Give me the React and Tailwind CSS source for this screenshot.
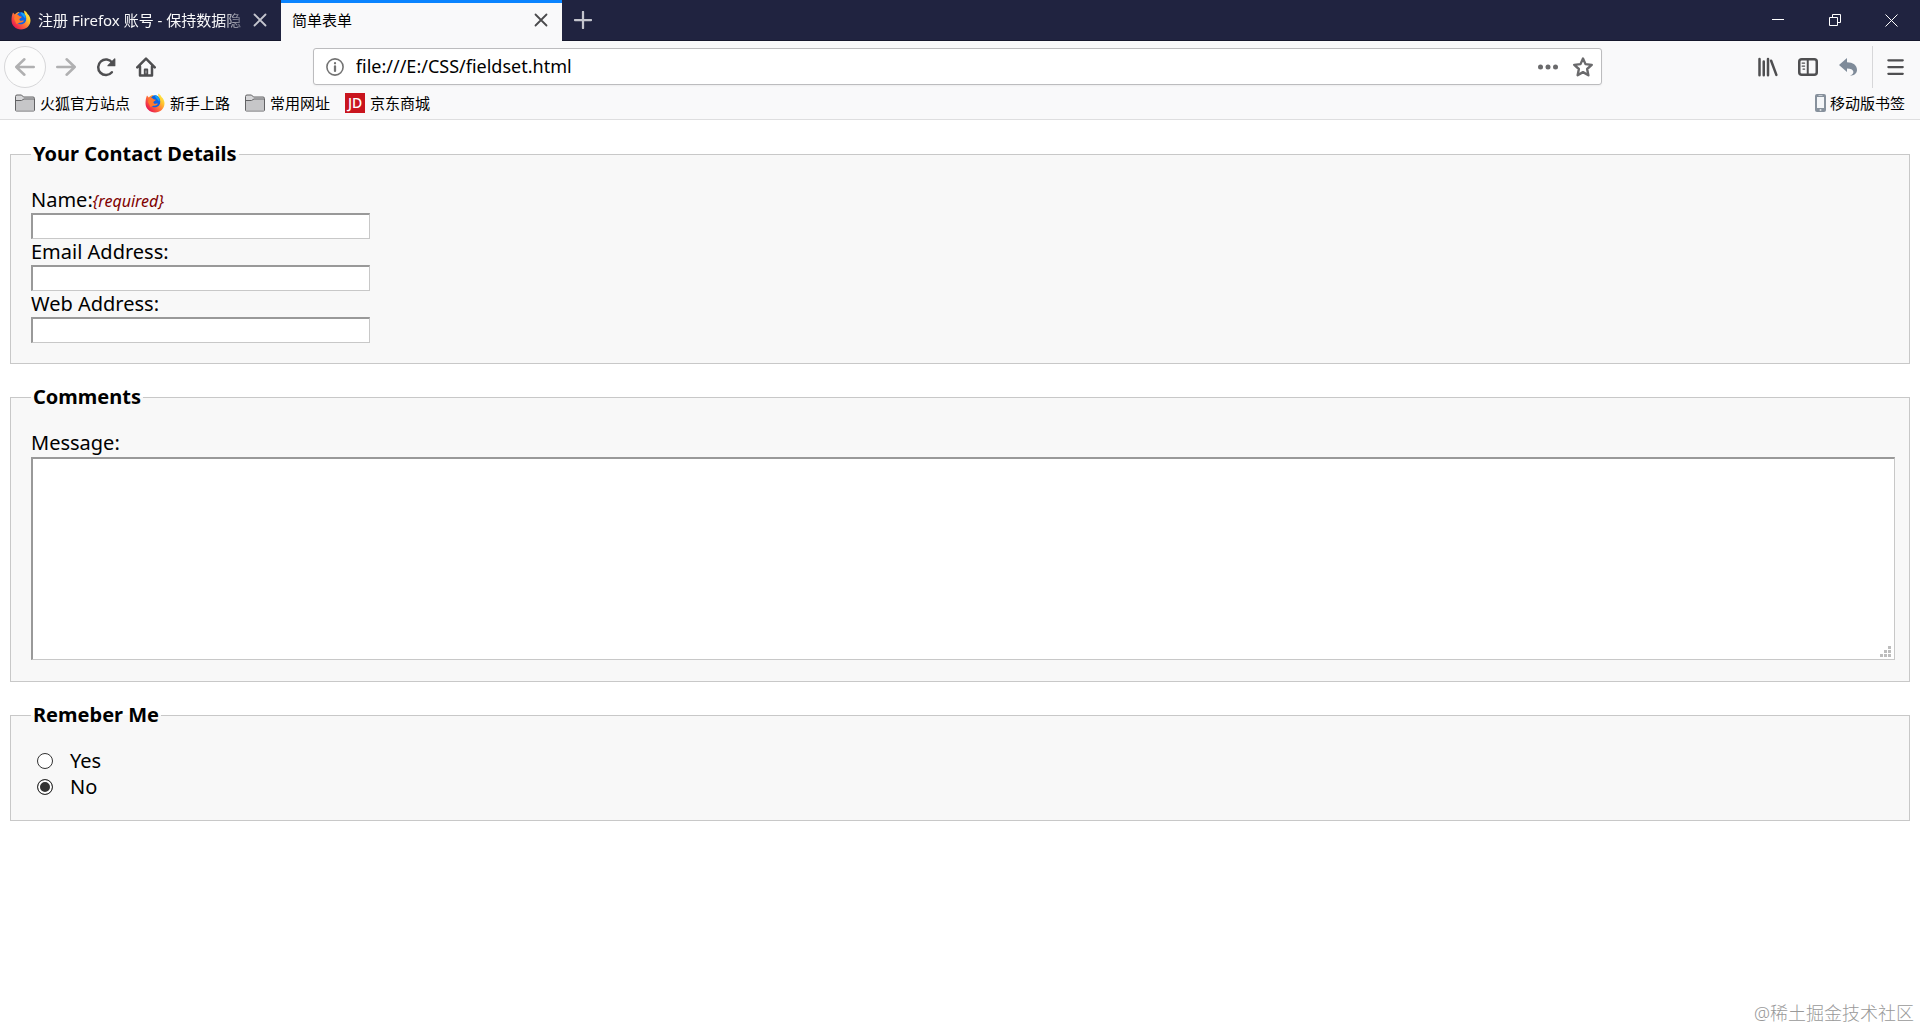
import { useId } from "react";

const iconProps = { viewBox: "0 0 16 16", fill: "none", stroke: "currentColor", strokeLinecap: "round", strokeLinejoin: "round" };

function FirefoxLogo() {
  const id = useId();
  return (
    <svg viewBox="0 0 20 20" className="size-5 shrink-0" aria-hidden="true">
      <defs>
        <linearGradient id={id} x1="0.95" y1="0.1" x2="0.15" y2="0.85">
          <stop offset="0" stopColor="#fff44f" />
          <stop offset="0.3" stopColor="#ffc42e" />
          <stop offset="0.6" stopColor="#ff7139" />
          <stop offset="1" stopColor="#ea1a4f" />
        </linearGradient>
      </defs>
      <path d="M2 2.500l1.800 2C5 3 6.500 2.200 8 2L9 3.500 13.500 4 13 .5c2 1 3 2 3.500 3.500C18.500 5.500 19.500 8 19.500 10.500c0 5-4.200 9-9.500 9s-9.500-4-9.500-9.200C.5 7.500 1 4.500 2 2.500z" fill={`url(#${id})`} />
      <path d="M7 3.500C9 1.500 12 2 13.500 4c2 2.500 2.500 6 .5 8.500-2 2.200-5.500 2.500-7.500.5C4.500 11 4.500 6 7 3.500z" fill="#0b63e5" />
      <path d="M9.500 2.600c2-.4 3.500.6 4.500 2.400.8 1.500.6 2.500.2 3.500L11 5z" fill="#10a4f5" />
      <path d="M4 5c1.500-.8 3-.5 4 .8.8.9 2 .6 2.800 1-.2 1.200-2 1.500-2.400 2.500.2 1.200 1 1.700 2.200 1.500 1-.2 1.700-.4 2.400 0-.8 1.500-2.600 2.200-4.500 1.900L5.500 14 3 9z" fill="#ff7a2c" />
    </svg>
  );
}

function FolderIcon() {
  return (
    <svg viewBox="0 0 20 20" className="size-5 shrink-0" aria-hidden="true">
      <path d="M.5 17V3.500a1.500 1.500 0 0 1 1.500-1.500h4.500l2 2H18a1.500 1.500 0 0 1 1.500 1.500V17a1 1 0 0 1-1 1h-17a1 1 0 0 1-1-1z" fill="#d6d6d8" stroke="#626264" />
      <path d="M1 8h5.700l2.400-1.500H19V17.500H1z" fill="#c6c6c8" />
      <path d="M1 7.500h5.500L9 6h10" fill="none" stroke="#626264" />
    </svg>
  );
}

function JdIcon() {
  return (
    <span className="flex size-5 shrink-0 items-center justify-center bg-[#c9151e] text-sm font-medium text-white">
      JD
    </span>
  );
}

function PhoneIcon() {
  return (
    <svg viewBox="0 0 20 20" className="size-5 shrink-0" aria-hidden="true">
      <rect x="5" y="1" width="11" height="18" rx="2" fill="#87919c" />
      <rect x="7" y="4" width="7" height="11" fill="#f4f6f8" />
      <path d="M8.500 2.500h4" stroke="#c6ccd2" />
      <circle cx="10.500" cy="17" r="1" fill="#dfe3e6" />
    </svg>
  );
}

const CloseIcon = () => (
  <svg {...iconProps} className="size-4" strokeWidth="1.800">
    <path d="M2.500 2.500l11 11M13.500 2.500l-11 11" />
  </svg>
);

const tabs = [
  { title: "注册 Firefox 账号 - 保持数据隐", logo: true, active: false },
  { title: "简单表单", logo: false, active: true },
];

const bookmarks = [
  { label: "火狐官方站点", icon: <FolderIcon /> },
  { label: "新手上路", icon: <FirefoxLogo /> },
  { label: "常用网址", icon: <FolderIcon /> },
  { label: "京东商城", icon: <JdIcon /> },
];

function TitleBar() {
  return (
    <div className="flex h-[41px] border-b border-[#15172c] bg-[#202340]">
      {tabs.map((tab) => (
        <div
          key={tab.title}
          className={
            tab.active
              ? "-mb-px flex w-[281px] items-center border-t-3 border-[#0a84ff] bg-[#f9f9fa] pr-[13px] pb-1 pl-[11px] text-black"
              : "flex w-[281px] items-center pr-[13px] pl-[11px] text-[#f9f9fa]"
          }
        >
          {tab.logo && <FirefoxLogo />}
          <span
            className={
              tab.logo
                ? "ml-[7px] flex-1 mask-r-from-85% mask-r-to-100% whitespace-nowrap"
                : "flex-1 whitespace-nowrap"
            }
          >
            {tab.title}
          </span>
          <button aria-label="关闭标签页" className={tab.active ? "text-[#4a4a4c]" : "text-[#c4c5ce]"}>
            <CloseIcon />
          </button>
        </div>
      ))}
      <button aria-label="新建标签页" className="ml-3 text-[#c4c5ce]">
        <svg {...iconProps} className="size-[18px]" strokeWidth="2">
          <path d="M8 .8v14.400M.8 8h14.400" />
        </svg>
      </button>
      <div className="ml-auto flex text-white">
        <button aria-label="最小化" className="flex w-[57px] items-center justify-center">
          <svg viewBox="0 0 12 12" className="size-3" fill="none" stroke="currentColor">
            <path d="M0 5.500h12" />
          </svg>
        </button>
        <button aria-label="还原" className="flex w-[57px] items-center justify-center">
          <svg viewBox="0 0 12 12" className="size-3" fill="none" stroke="currentColor">
            <path d="M.5 3.500h8v8h-8zM3.500 3.500v-3h8v8h-3" />
          </svg>
        </button>
        <button aria-label="关闭" className="flex w-[57px] items-center justify-center">
          <svg viewBox="0 0 13 13" className="size-[13px]" fill="none" stroke="currentColor">
            <path d="M.5.5l12 12M12.500.5l-12 12" />
          </svg>
        </button>
      </div>
    </div>
  );
}

function NavBar() {
  return (
    <div className="flex h-[50px] items-center pt-px pl-1 text-[#4f4f51]">
      <button aria-label="后退" className="flex size-[42px] items-center justify-center rounded-full border border-[#d7d7d9] bg-[#fcfcfc] text-[#b0b0b1]">
        <svg {...iconProps} className="size-5" strokeWidth="2">
          <path d="M15 8H1M7.500 1.800L1 8l6.500 6.200" />
        </svg>
      </button>
      <button aria-label="前进" className="flex w-10 items-center justify-center text-[#b0b0b1]">
        <svg {...iconProps} className="size-5" strokeWidth="2">
          <path d="M1 8H15M8.500 1.800L15 8l-6.500 6.200" />
        </svg>
      </button>
      <button aria-label="刷新" className="flex w-10 items-center justify-center">
        <svg {...iconProps} className="size-5" strokeWidth="2">
          <path d="M12.700 12.200A6.200 6.200 0 1 1 13 4.600" />
          <path d="M15 1.500v5.400H9.600z" fill="currentColor" strokeWidth="1" />
        </svg>
      </button>
      <button aria-label="主页" className="flex w-10 items-center justify-center">
        <svg {...iconProps} className="size-5" strokeWidth="2">
          <path d="M1 8.300L8 1.300l7 7M3.200 7.500V14.700h9.600V7.500" />
          <path d="M7 14v-4h2v4z" strokeWidth="1.500" />
        </svg>
      </button>
      <div className="flex-[149]" />
      <div className="flex h-[37px] flex-[1286] items-center rounded-[3px] border border-[#bcbcbe] bg-white pr-2 pl-3 shadow-xs">
        <svg {...iconProps} className="size-[18px] text-[#737373]" strokeWidth="1.400">
          <circle cx="8" cy="8" r="7.200" />
          <path d="M8 7.500v4" strokeWidth="2" />
          <path d="M8 4.600v.1" strokeWidth="2" />
        </svg>
        <input
          aria-label="地址"
          defaultValue="file:///E:/CSS/fieldset.html"
          className="ml-3 min-w-0 flex-1 pb-px text-lg text-black outline-none"
        />
        <button aria-label="页面操作" className="flex w-9 justify-center text-[#6a6a6c]">
          <svg viewBox="0 0 20 20" className="size-5" fill="currentColor">
            <circle cx="2.500" cy="10" r="2.500" />
            <circle cx="10" cy="10" r="2.500" />
            <circle cx="17.500" cy="10" r="2.500" />
          </svg>
        </button>
        <button aria-label="收藏" className="ml-[7px] text-[#6a6a6c]">
          <svg {...iconProps} className="size-5" strokeWidth="1.900">
            <path d="M8 1.200l2 4.500 5 .6-3.700 3.300 1 5L8 12.100l-4.300 2.500 1-5L1 6.300l5-.6z" />
          </svg>
        </button>
      </div>
      <div className="flex-[148]" />
      <button aria-label="书库" className="flex w-10 items-center justify-center">
        <svg {...iconProps} className="size-5" strokeWidth="2">
          <path d="M1.200 1.500v13M4.600 3.500v11M8 1.500v13M10.500 3l4.200 11.300" />
        </svg>
      </button>
      <button aria-label="侧栏" className="flex w-10 items-center justify-center">
        <svg {...iconProps} className="size-5" strokeWidth="2">
          <rect x="1" y="1.800" width="14" height="12.400" rx="2" />
          <path d="M7.800 2v12" strokeWidth="1.600" />
          <path d="M3.300 4.800h2M3.300 7.200h2M4 9.600h1.300" strokeWidth="1" />
        </svg>
      </button>
      <button aria-label="撤销" className="flex w-10 items-center justify-center text-[#7f8b99]">
        <svg viewBox="0 0 20 20" className="size-5" fill="currentColor">
          <path d="M1 8L9 1v4.200c6 0 10 3 10 7.800 0 3-2.500 5.600-7 5.800 2.800-1 3.600-2.600 3.300-4.200-.4-2-2.500-3.200-6.300-3.200V15z" />
        </svg>
      </button>
      <div className="ml-1 h-[42px] w-px bg-[#d7d7d9]" />
      <button aria-label="菜单" className="flex w-[47px] items-center justify-center">
        <svg {...iconProps} className="size-[18px]" strokeWidth="2">
          <path d="M1.200 2h12.800M1.200 8h12.800M1.200 14h12.800" />
        </svg>
      </button>
    </div>
  );
}

function BookmarksBar() {
  return (
    <div className="flex h-[29px] items-center border-b border-[#dededf] pr-[15px] pb-[5px] pl-[15px]">
      <div className="flex gap-[15px]">
        {bookmarks.map((item) => (
          <a key={item.label} href="#" className="flex items-center gap-[5px]">
            {item.icon}
            {item.label}
          </a>
        ))}
      </div>
      <a href="#" className="ml-auto flex items-center">
        <PhoneIcon />
        移动版书签
      </a>
    </div>
  );
}

function Fieldset({ legend, children }) {
  return (
    <fieldset className="min-w-0 border border-[#c8c8c8] bg-[#f8f8f8] p-5">
      <legend className="px-[2px] font-bold">{legend}</legend>
      {children}
    </fieldset>
  );
}

function TextField({ id, label, required }) {
  return (
    <>
      <label htmlFor={id} className="block">
        {label}
        {required && <em className="text-base leading-5 text-[#800000]">{"{required}"}</em>}
      </label>
      <input
        id={id}
        type="text"
        className="block h-[26px] w-[339px] border border-t-2 border-l-2 border-[#c8c8c8] border-t-[#999] border-l-[#999] bg-white px-1 text-base outline-none"
      />
    </>
  );
}

function RadioField({ id, label, defaultChecked }) {
  return (
    <div className="flex items-center pl-[6px]">
      <input
        id={id}
        type="radio"
        name="remember"
        defaultChecked={defaultChecked}
        className="size-4 appearance-none rounded-full border border-[#333] bg-white checked:bg-[#333] checked:shadow-[inset_0_0_0_2px_white]"
      />
      <label htmlFor={id} className="pl-[17px]">{label}</label>
    </div>
  );
}

export default function App() {
  return (
    <div className="flex min-h-screen flex-col bg-white font-['Noto_Sans','Noto_Sans_CJK_SC',sans-serif] text-black">
      <header className="bg-[#f9f9fa] text-[15px] leading-5">
        <TitleBar />
        <NavBar />
        <BookmarksBar />
      </header>

      <form className="flex flex-col gap-5 px-[10px] pt-[21px] text-xl leading-[26px]">
        <Fieldset legend="Your Contact Details">
          <TextField id="name" label="Name:" required />
          <TextField id="email" label="Email Address:" />
          <TextField id="web" label="Web Address:" />
        </Fieldset>

        <Fieldset legend="Comments">
          <label htmlFor="message" className="block">Message:</label>
          <div className="relative my-px -mr-[6px]">
            <textarea
              id="message"
              className="block h-[203px] w-full resize-none border border-t-2 border-l-2 border-[#c8c8c8] border-t-[#999] border-l-[#999] bg-white p-1 outline-none"
            />
            <svg viewBox="0 0 11 11" className="absolute right-1 bottom-[3px] size-[11px]" fill="#bdbdbd" aria-hidden="true">
              <path d="M8 0h3v3H8zM4 4h3v3H4zM8 4h3v3H8zM0 8h3v3H0zM4 8h3v3H4zM8 8h3v3H8z" />
            </svg>
          </div>
        </Fieldset>

        <Fieldset legend="Remeber Me">
          <RadioField id="yes" label="Yes" />
          <RadioField id="no" label="No" defaultChecked />
        </Fieldset>
      </form>

      <footer className="mt-auto pr-[6px] pb-[3px] text-right text-lg font-light text-[#999]">@稀土掘金技术社区</footer>
    </div>
  );
}
